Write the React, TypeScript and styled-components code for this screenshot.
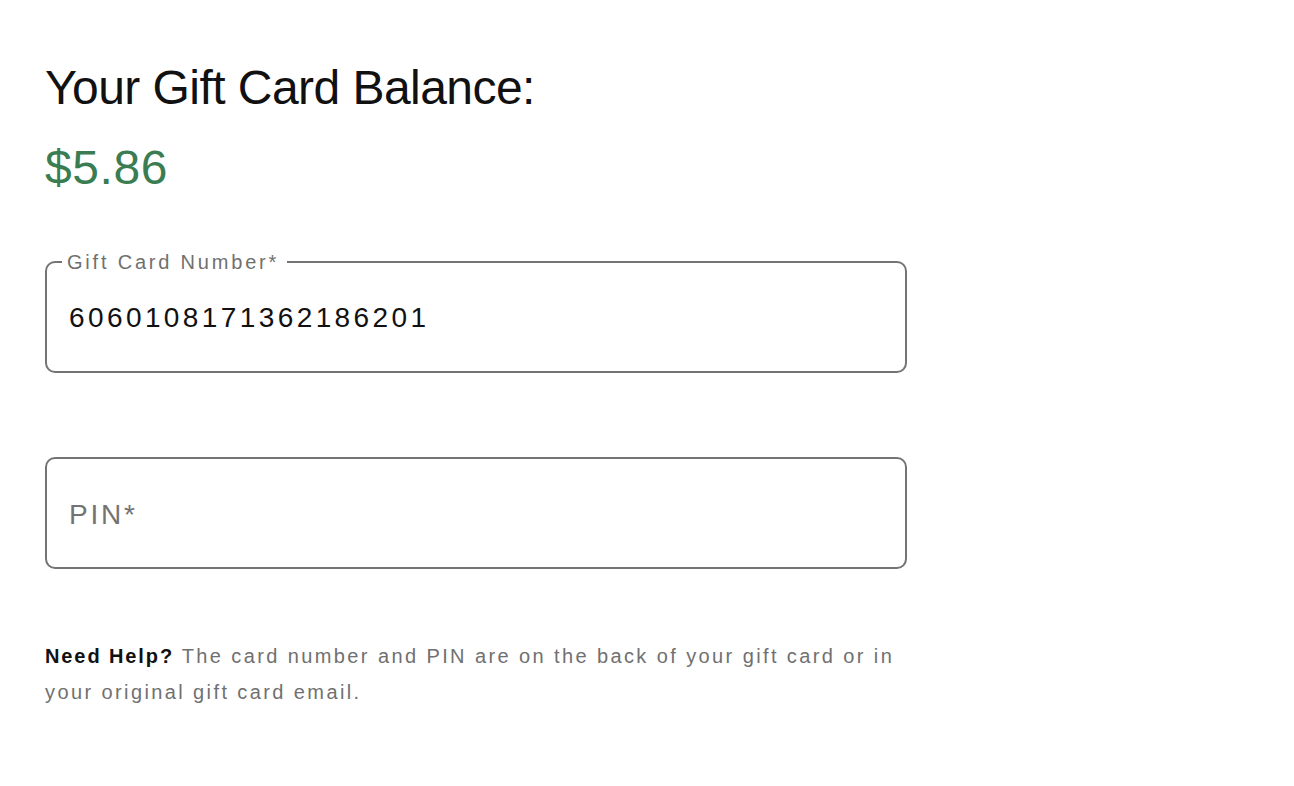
import React from "react";
import styled, { createGlobalStyle } from "styled-components";

const GlobalStyle = createGlobalStyle`
  html, body {
    margin: 0;
    padding: 0;
    background: #ffffff;
  }
  body {
    font-family: "Liberation Sans", Arial, Helvetica, sans-serif;
    color: #111111;
  }
  * { box-sizing: border-box; }
`;

const Page = styled.main`
  display: flex;
  flex-direction: column;
  padding: 60px 0 0 45px;
  width: 907px;
`;

const Heading = styled.h1`
  margin: 0;
  font-size: 48px;
  line-height: 56px;
  font-weight: 400;
  letter-spacing: -0.55px;
  color: #111111;
`;

const Balance = styled.div`
  margin-top: 24px;
  font-size: 48px;
  line-height: 56px;
  font-weight: 400;
  color: #3a7d53;
  letter-spacing: 0.6px;
`;

const Field = styled.fieldset<{ $hasLabel?: boolean; $top: number }>`
  margin: ${(p) => p.$top}px 0 0 0;
  min-width: 0;
  border: 2px solid #747474;
  border-radius: 10px;
  padding: ${(p) => (p.$hasLabel ? "29px 22px 36px" : "39px 22px 35px")};
  display: block;
`;

const Legend = styled.legend`
  margin-left: -7px;
  padding: 0 8px 0 5px;
  font-size: 20px;
  line-height: 20px;
  color: #707070;
  letter-spacing: 2.8px;
`;

const Input = styled.input<{ $digits?: boolean }>`
  display: block;
  width: 100%;
  height: 34px;
  border: 0;
  padding: 0;
  margin: 0;
  outline: none;
  background: transparent;
  font-family: "Liberation Sans", Arial, Helvetica, sans-serif;
  font-size: 28px;
  line-height: 34px;
  color: #111111;
  letter-spacing: ${(p) => (p.$digits ? "3.4px" : "2.8px")};
  &::placeholder {
    color: #737373;
    opacity: 1;
  }
`;

const Help = styled.p`
  margin: 69px 0 0 0;
  font-size: 20px;
  line-height: 36px;
  color: #707070;
  letter-spacing: 2.4px;
`;

const Strong = styled.strong`
  font-weight: 700;
  color: #111111;
  letter-spacing: 1.9px;
`;

export default function App() {
  return (
    <>
      <GlobalStyle />
      <Page>
        <Heading>Your Gift Card Balance:</Heading>
        <Balance>$5.86</Balance>
        <Field $hasLabel $top={56}>
          <Legend>Gift Card Number*</Legend>
          <Input $digits defaultValue="6060108171362186201" aria-label="Gift Card Number" />
        </Field>
        <Field $top={84}>
          <Input placeholder="PIN*" aria-label="PIN" />
        </Field>
        <Help>
          <Strong>Need Help?</Strong> The card number and PIN are on the back of your gift card or in your original gift card email.
        </Help>
      </Page>
    </>
  );
}
